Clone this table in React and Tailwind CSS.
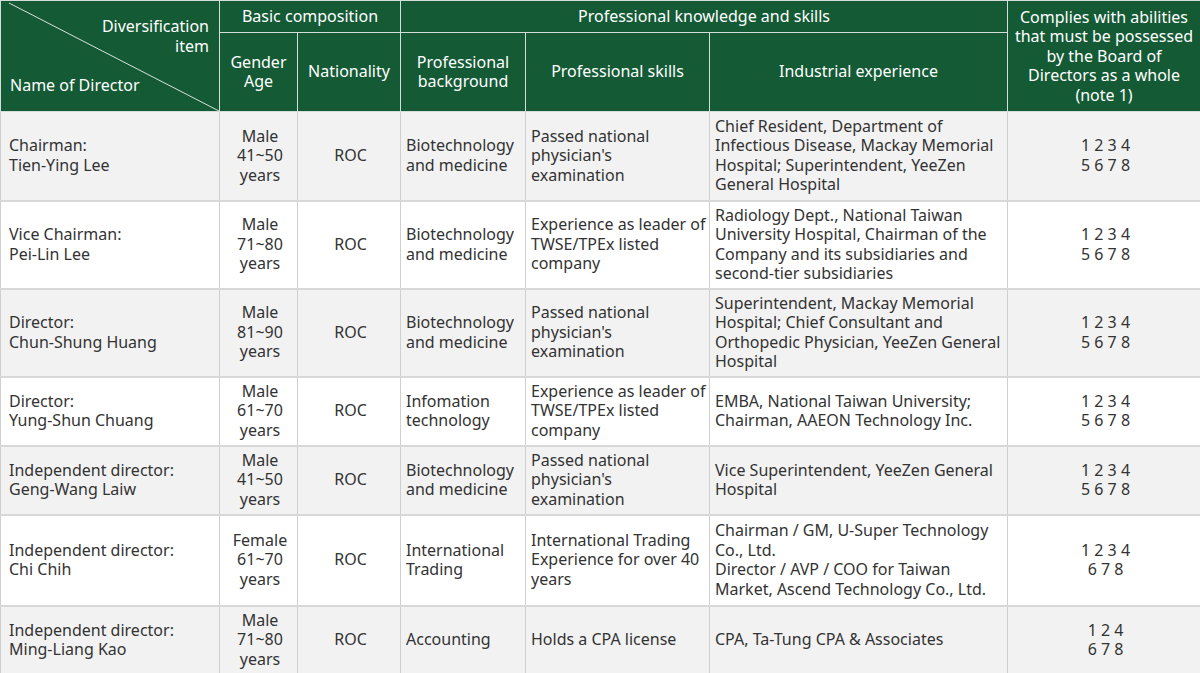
import React from 'react';

const rows = [
  {
    name: ['Chairman:', 'Tien-Ying Lee'],
    age: ['Male', '41~50', 'years'],
    bg: 'Biotechnology and medicine',
    skills: "Passed national physician's examination",
    exp: ['Chief Resident, Department of Infectious Disease, Mackay Memorial Hospital; Superintendent, YeeZen General Hospital'],
    abil: ['1 2 3 4', '5 6 7 8'],
    h: 'h-[89px]',
  },
  {
    name: ['Vice Chairman:', 'Pei-Lin Lee'],
    age: ['Male', '71~80', 'years'],
    bg: 'Biotechnology and medicine',
    skills: 'Experience as leader of TWSE/TPEx listed company',
    exp: ['Radiology Dept., National Taiwan University Hospital, Chairman of the Company and its subsidiaries and second-tier subsidiaries'],
    abil: ['1 2 3 4', '5 6 7 8'],
    h: 'h-[88px]',
  },
  {
    name: ['Director:', 'Chun-Shung Huang'],
    age: ['Male', '81~90', 'years'],
    bg: 'Biotechnology and medicine',
    skills: "Passed national physician's examination",
    exp: ['Superintendent, Mackay Memorial Hospital; Chief Consultant and Orthopedic Physician, YeeZen General Hospital'],
    abil: ['1 2 3 4', '5 6 7 8'],
    h: 'h-[87px]',
  },
  {
    name: ['Director:', 'Yung-Shun Chuang'],
    age: ['Male', '61~70', 'years'],
    bg: 'Infomation technology',
    skills: 'Experience as leader of TWSE/TPEx listed company',
    exp: ['EMBA, National Taiwan University; Chairman, AAEON Technology Inc.'],
    abil: ['1 2 3 4', '5 6 7 8'],
    h: 'h-[69px]',
  },
  {
    name: ['Independent director:', 'Geng-Wang Laiw'],
    age: ['Male', '41~50', 'years'],
    bg: 'Biotechnology and medicine',
    skills: "Passed national physician's examination",
    exp: ['Vice Superintendent, YeeZen General Hospital'],
    abil: ['1 2 3 4', '5 6 7 8'],
    h: 'h-[69px]',
  },
  {
    name: ['Independent director:', 'Chi Chih'],
    age: ['Female', '61~70', 'years'],
    bg: 'International Trading',
    skills: 'International Trading Experience for over 40 years',
    exp: ['Chairman / GM, U-Super Technology Co., Ltd.', 'Director / AVP / COO for Taiwan Market, Ascend Technology Co., Ltd.'],
    abil: ['1 2 3 4', '6 7 8'],
    h: 'h-[91px]',
  },
  {
    name: ['Independent director:', 'Ming-Liang Kao'],
    age: ['Male', '71~80', 'years'],
    bg: 'Accounting',
    skills: 'Holds a CPA license',
    exp: ['CPA, Ta-Tung CPA & Associates'],
    abil: ['1 2 4', '6 7 8'],
    h: 'h-[69px]',
  },
];

const th = 'border border-[#d6dcd8] bg-[#145a35] text-white font-normal text-center align-middle px-1';
const td = 'border-x border-[#cfcfcf] border-b-2 border-b-[#d8d8d8] pl-[5px] pr-[2px] py-[4px] align-middle';

export default function App() {
  return (
    <div className="w-[1200px] h-[673px] overflow-hidden bg-white font-['Noto_Sans','Open_Sans',sans-serif] text-[16px] leading-[19.5px] text-[#333]">
      <table className="w-[1200px] table-fixed border-collapse">
        <colgroup>
          <col className="w-[219px]" />
          <col className="w-[78px]" />
          <col className="w-[103px]" />
          <col className="w-[125px]" />
          <col className="w-[184px]" />
          <col className="w-[298px]" />
          <col className="w-[193px]" />
        </colgroup>
        <thead>
          <tr className="h-[32px]">
            <th rowSpan={2} className="relative border border-[#d6dcd8] bg-[#145a35] text-white font-normal p-0 h-[111px]">
              <svg className="absolute inset-0 w-full h-full" viewBox="0 0 219 111" preserveAspectRatio="none">
                <line x1="8" y1="2" x2="219" y2="111" stroke="#d9e3dc" strokeWidth="1" />
              </svg>
              <div className="relative flex flex-col h-full pt-[16px] pb-[16px] pl-[9px] pr-[10px]">
                <div className="text-right">Diversification<br />item</div>
                <div className="mt-auto text-left">Name of Director</div>
              </div>
            </th>
            <th colSpan={2} className={th}>Basic composition</th>
            <th colSpan={3} className={th}>Professional knowledge and skills</th>
            <th rowSpan={2} className={th + ' pt-[1px]'}>
              Complies with abilities that must be possessed by the Board of Directors as a whole (note 1)
            </th>
          </tr>
          <tr className="h-[79px]">
            <th className={th}>Gender<br />Age</th>
            <th className={th}>Nationality</th>
            <th className={th}>Professional<br />background</th>
            <th className={th}>Professional skills</th>
            <th className={th}>Industrial experience</th>
          </tr>
        </thead>
        <tbody>
          {rows.map((r, i) => (
            <tr key={i} className={(i % 2 === 0 ? 'bg-[#f2f2f2] ' : 'bg-white ') + r.h}>
              <td className={td + ' pl-[8px]'}>
                {r.name[0]}<br />{r.name[1]}
              </td>
              <td className={td + ' text-center'}>
                {r.age.map((a) => <div key={a}>{a}</div>)}
              </td>
              <td className={td + ' text-center'}>ROC</td>
              <td className={td}>{r.bg}</td>
              <td className={td}>{r.skills}</td>
              <td className={td}>
                {r.exp.map((e) => <div key={e}>{e}</div>)}
              </td>
              <td className={td + ' text-center'}>
                {r.abil.map((a) => <div key={a}>{a}</div>)}
              </td>
            </tr>
          ))}
        </tbody>
      </table>
    </div>
  );
}
